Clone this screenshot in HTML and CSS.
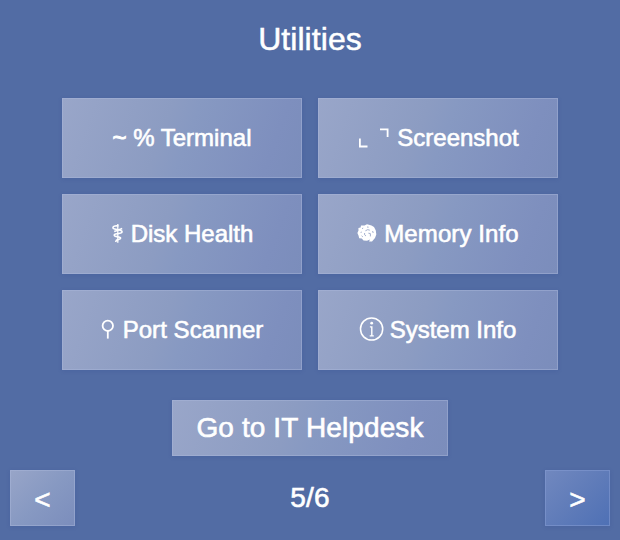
FILE: index.html
```html
<!DOCTYPE html>
<html lang="en">
<head>
<meta charset="utf-8">
<title>Utilities</title>
<link rel="stylesheet" href="styles.css">
</head>
<body>
<main class="panel">
  <h1 class="title">Utilities</h1>
  <div class="grid">
    <button class="tile"><span class="terminal"><span class="tilde">~</span> % Terminal</span></button>
    <button class="tile corners">
      <svg width="32" height="24" viewBox="0 0 32 24"><path d="M2.9 12.5V20.5H10.5M23 3.4H30.6V11" fill="none" stroke="#fff" stroke-width="1.8"/></svg>
      <span>Screenshot</span>
    </button>
    <button class="tile">
      <svg width="13" height="24" viewBox="0 0 13 24"><path d="M6.8 2V20.8" fill="none" stroke="#fff" stroke-width="1.3"/><path d="M7.5 3.6L4 4C1.4 4.4 1.2 6.6 3.6 7L9.2 8.2C12 9 11.6 10.8 9 11.2L4.6 12C2.6 12.5 2.8 14 4.8 14.4L8.6 15.2C10.2 15.7 9.8 17 8 17.3L5.5 18.2 4.6 20M11.2 6.6L6.8 8.2 3.2 9.6" fill="none" stroke="#fff" stroke-width="1.6"/></svg>
      <span>Disk Health</span>
    </button>
    <button class="tile memory">
      <svg width="20" height="24" viewBox="0 0 20 24"><path d="M4 3.5L7.5 3.6 10 2.2 14.5 3.4 17 5 18.8 8.5 19.3 12.5 18 16 15 19.5 12 19.5 13 17.6 10 18.8 6.5 18.4 4.8 16.6 2.2 16.2 1.5 13.5.4 11 1.5 8.5 1.4 6 3.6 5.6Z" fill="#fff"/><path d="M5 6.6l1.2-.5M10 5l1.6.2M3.6 10.4l1.2-.3M8.4 8.8q2.4-2 4.4-.6M15.6 9l.6 2M7.6 11v1.8l1.4 1.2M11.4 11.2l2 .4v2.8M4.6 13.8l1.2 1" fill="none" stroke="#8e9dc3" stroke-width=".8"/></svg>
      <span>Memory Info</span>
    </button>
    <button class="tile port">
      <svg width="14" height="24" viewBox="0 0 14 24"><circle cx="6.8" cy="7.8" r="5.2" fill="none" stroke="#fff" stroke-width="1.8"/><path d="M6.8 13V20.6" stroke="#fff" stroke-width="1.8"/></svg>
      <span>Port Scanner</span>
    </button>
    <button class="tile system">
      <svg width="25" height="25" viewBox="0 0 25 25"><circle cx="11.6" cy="11" r="11.1" fill="none" stroke="#fff" stroke-width="1.5"/><circle cx="11.7" cy="5.2" r="1.4" fill="#fff"/><path d="M9.9 8.9h1.9v8.9M9.7 17.9h4.1" fill="none" stroke="#fff" stroke-width="1.4"/></svg>
      <span>System Info</span>
    </button>
  </div>
  <button class="helpdesk"><span>Go to IT Helpdesk</span></button>
  <nav class="pager">
    <button class="step"><span>&lt;</span></button>
    <span class="count">5/6</span>
    <button class="step next"><span>&gt;</span></button>
  </nav>
</main>
</body>
</html>
```
FILE: styles.css
```css
* { box-sizing: border-box; }
body {
  margin: 0;
  background: #526ca4;
  color: #fff;
  font-family: "Liberation Sans", Arial, sans-serif;
}
.panel {
  height: 540px;
  display: flex;
  flex-direction: column;
  align-items: center;
}
.title {
  margin: 20px 0 40px;
  height: 38px;
  font-size: 32px;
  line-height: 38px;
  font-weight: 400;
  letter-spacing: 0.05px;
  -webkit-text-stroke: 0.5px #fff;
}
.grid {
  display: grid;
  grid-template-columns: 240px 240px;
  grid-auto-rows: 80px;
  gap: 16px;
}
button {
  margin: 0;
  padding: 0;
  display: flex;
  align-items: center;
  justify-content: center;
  border: 1px solid rgba(170, 184, 220, 0.45);
  border-radius: 0;
  background: linear-gradient(110deg, #99a6c9 0%, #8c9cc2 42%, #8799c2 52%, #7e8fbe 85%, #7b8dbb 100%);
  background-origin: border-box;
  box-shadow: 0 1px 4px rgba(50, 72, 145, 0.22);
  color: #fff;
  font: 24px/28px "Liberation Sans", Arial, sans-serif;
  white-space: nowrap;
  -webkit-text-stroke: 0.6px #fff;
}
.tile { gap: 7px; }
.tile svg { flex: none; overflow: visible; }
.tilde { -webkit-text-stroke-width: 1px; }
.corners { gap: 8px; }
.memory span { letter-spacing: 0.1px; }
.port { gap: 8px; }
.port span { letter-spacing: 0.05px; }
.system { gap: 5px; }
.helpdesk {
  width: 276px;
  height: 56px;
  margin-top: 30px;
  font-size: 28px;
  letter-spacing: 0.12px;
}
.pager {
  width: 600px;
  margin-top: 14px;
  display: flex;
  align-items: center;
  justify-content: space-between;
}
.step {
  width: 65px;
  height: 56px;
  padding-top: 4px;
  font-size: 28px;
  background: linear-gradient(135deg, #98a5c8, #8799c2 50%, #7b8dbc);
  background-origin: border-box;
}
.next {
  background: linear-gradient(135deg, #7188bf, #607cb9 50%, #4e70b5);
  background-origin: border-box;
  border-color: rgba(130, 154, 208, 0.6);
}
.count {
  font-size: 28px;
  line-height: 32px;
  letter-spacing: 0.2px;
  -webkit-text-stroke: 0.6px #fff;
}
```
